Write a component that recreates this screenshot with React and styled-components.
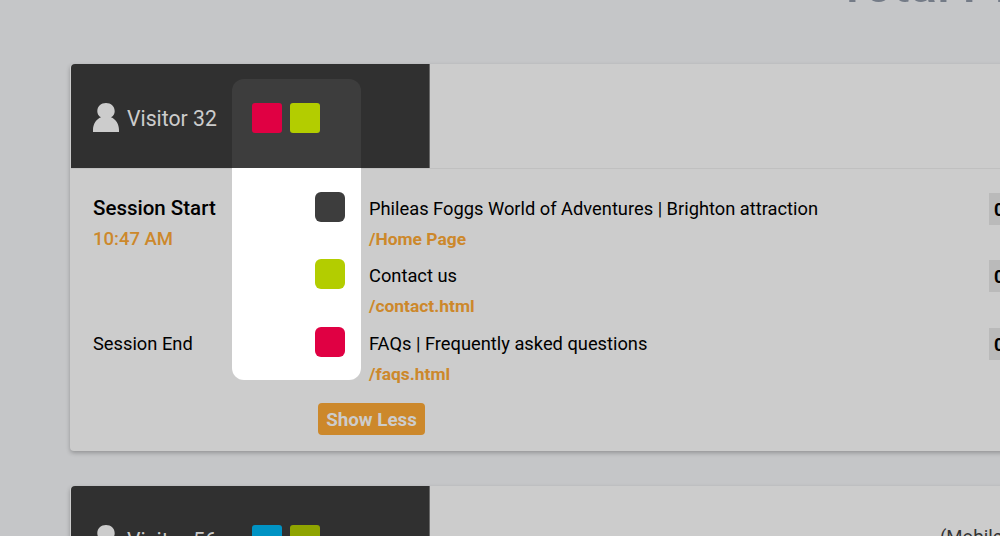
import React from "react";
import styled, { createGlobalStyle } from "styled-components";

const GlobalStyle = createGlobalStyle`
  * { box-sizing: border-box; }
  body { margin: 0; font-family: Roboto, "Liberation Sans", sans-serif; background: #c5c6c8; }
`;

const Page = styled.main`
  height: 536px;
  overflow: hidden;
  background: #c5c6c8;
  color: #000;
`;

const Heading = styled.h1`
  margin: 0 0 0 837px;
  height: 64px;
  overflow: hidden;
  font-size: 50.5px;
  font-weight: 500;
  line-height: 50px;
  color: #747b87;
  white-space: nowrap;
  & > span { display: block; margin-top: -40px; }
`;

const Card = styled.section`
  position: relative;
  width: 1100px;
  margin: 0 0 35px 70px;
  padding-left: 1px;
  background: #ccc;
  border-radius: 4px;
  box-shadow: 0 2px 4px rgba(0, 0, 0, 0.25);
`;

const CardHeader = styled.header`
  display: flex;
  height: 105px;
  border-bottom: 1px solid #c0c0c0;
`;

const VisitorPanel = styled.div`
  display: flex;
  align-items: center;
  width: 359px;
  height: 104px;
  padding: 4px 0 0 22px;
  background: #303030;
  border-right: 1px solid #686868;
  border-top-left-radius: 4px;
`;

const VisitorName = styled.span`
  width: 125px;
  margin-left: 8px;
  padding-top: 2px;
  font-size: 21.2px;
  line-height: 30px;
  color: #ccc;
  white-space: nowrap;
`;

const SwatchGroup = styled.div`
  position: relative;
  display: flex;
  gap: 8px;
`;

const Swatch = styled.span`
  position: relative;
  width: 30px;
  height: 30px;
  border-radius: ${(p) => p.$radius || 3}px;
  background: ${(p) => p.$color};
`;

const Device = styled.span`
  margin: 37px 0 0 510px;
  font-size: 18.6px;
  line-height: 29px;
  color: #333;
`;

const Spotlight = styled.div`
  position: absolute;
  left: 162px;
  top: 15px;
  width: 129px;
  height: 301px;
  border-radius: 12px;
  background: linear-gradient(#3d3d3d 89px, #fff 89px);
`;

const CardBody = styled.div`
  height: 282px;
  padding: 23px 0 0 22px;
`;

const Step = styled.div`
  display: grid;
  grid-template-columns: 198px 30px 596px 80px;
  column-gap: 24px;
  height: ${(p) => p.$height}px;
`;

const Lines = styled.div`
  padding-top: 1px;
  font-size: 18.3px;
  line-height: 31px;
  white-space: nowrap;
`;

const StepLabel = styled.div`
  font-size: ${(p) => (p.$strong ? 20.5 : 18.3)}px;
  font-weight: ${(p) => (p.$strong ? 500 : 400)};
  line-height: ${(p) => (p.$strong ? 32 : 33)}px;
`;

const Time = styled.div`
  font-size: 18.5px;
  font-weight: 500;
  line-height: 30px;
  color: #cc882b;
`;

const PagePath = styled.div`
  font-size: 17.4px;
  font-weight: 700;
  line-height: 31px;
  color: #cc882b;
`;

const Duration = styled.span`
  width: 80px;
  height: 32px;
  margin-top: 1px;
  padding-left: 5px;
  background: #bababa;
  font-size: 18px;
  font-weight: 700;
  line-height: 34px;
`;

const ShowLess = styled.button`
  display: block;
  width: 107px;
  height: 32px;
  margin: 9px 0 0 225px;
  padding: 1px 0 0;
  border: 0;
  border-radius: 4px;
  background: #cc882b;
  color: #ccc;
  font: 700 18.8px/32px Roboto, sans-serif;
`;

const IconSvg = styled.svg`
  margin-top: -2px;
  fill: #ccc;
`;

function PersonIcon() {
  return (
    <IconSvg width="26" height="29" viewBox="0 0 26 29">
      <path d="M8 14.300C5.500 13 4.300 10.800 4.300 8.200 4.300 3.200 8 0 13 0s8.700 3.200 8.700 8.200c0 2.600-1.200 4.800-3.700 6.100C22.700 16.300 26 21 26 27v2H0v-2c0-6 3.300-10.700 8-12.700Z" />
    </IconSvg>
  );
}

function VisitorHeader({ name, colors, device }) {
  return (
    <CardHeader>
      <VisitorPanel>
        <PersonIcon />
        <VisitorName>{name}</VisitorName>
        <SwatchGroup>
          {colors.map((c) => <Swatch key={c} $color={c} />)}
        </SwatchGroup>
      </VisitorPanel>
      {device && <Device>{device}</Device>}
    </CardHeader>
  );
}

const steps = [
  { label: "Session Start", time: "10:47 AM", strong: true, color: "#3d3d3d", title: "Phileas Foggs World of Adventures | Brighton attraction", path: "/Home Page", height: 67 },
  { color: "#b3cd00", title: "Contact us", path: "/contact.html", height: 68 },
  { label: "Session End", color: "#e00043", title: "FAQs | Frequently asked questions", path: "/faqs.html", height: 67 },
];

export default function App() {
  return (
    <>
      <GlobalStyle />
      <Page>
        <Heading><span>Total Pl</span></Heading>
        <Card>
          <Spotlight />
          <VisitorHeader name="Visitor 32" colors={["#e00043", "#b3cd00"]} />
          <CardBody>
            {steps.map((s) => (
              <Step key={s.path} $height={s.height}>
                <div>
                  <StepLabel $strong={s.strong}>{s.label}</StepLabel>
                  {s.time && <Time>{s.time}</Time>}
                </div>
                <Swatch $color={s.color} $radius={6} />
                <Lines>
                  <div>{s.title}</div>
                  <PagePath>{s.path}</PagePath>
                </Lines>
                <Duration>00:12</Duration>
              </Step>
            ))}
            <ShowLess>Show Less</ShowLess>
          </CardBody>
        </Card>
        <Card>
          <VisitorHeader name="Visitor 56" colors={["#0093c4", "#8fa400"]} device="(Mobile)" />
        </Card>
      </Page>
    </>
  );
}
